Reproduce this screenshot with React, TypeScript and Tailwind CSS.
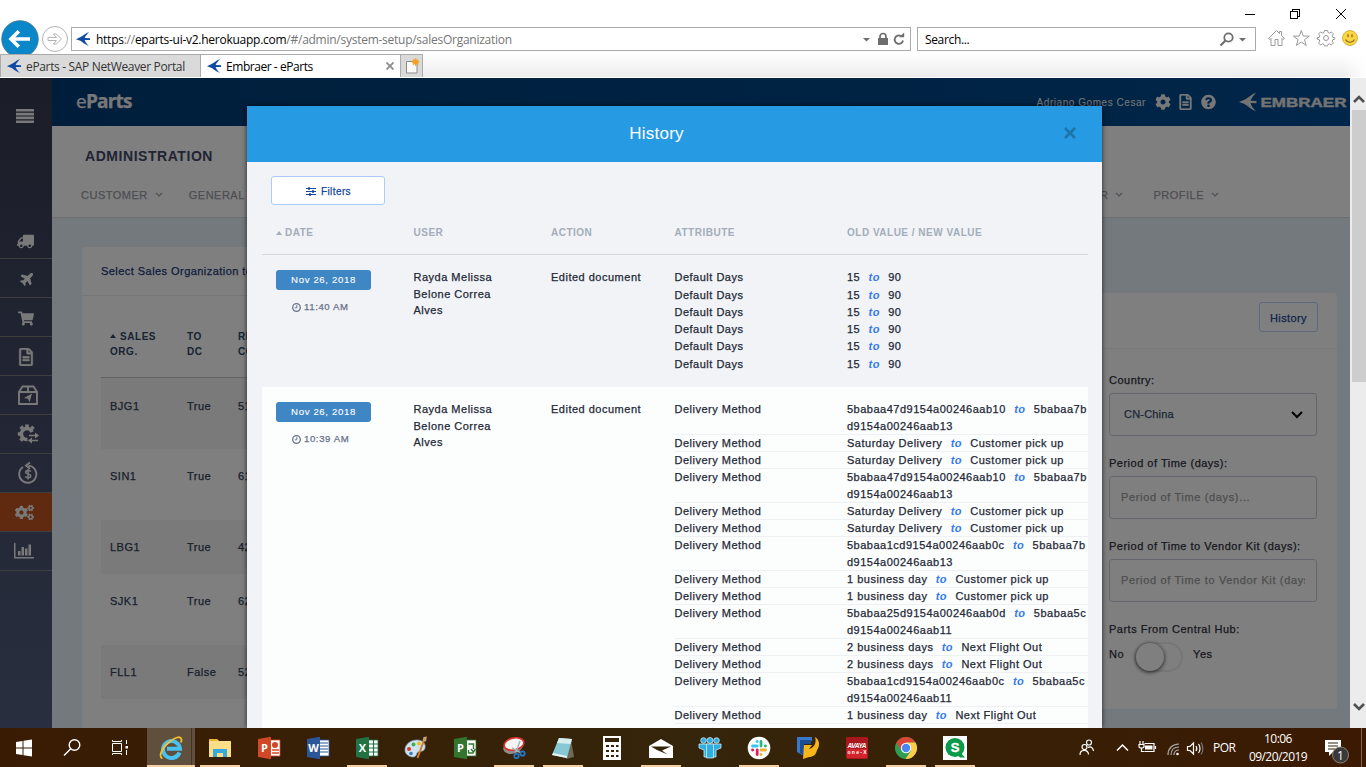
import React from "react";
import {
  FaTruck, FaPlane, FaShoppingCart, FaRegFileAlt, FaCog, FaCogs, FaQuestionCircle,
} from "react-icons/fa";

type Change = { from: string; to: string };

const A10 = "5babaa47d9154a00246aab10";
const C0C = "5babaa1cd9154a00246aab0c";
const D0D = "5babaa25d9154a00246aab0d";
const B13 = "5babaa7bd9154a00246aab13";
const B11 = "5babaa5cd9154a00246aab11";
const sat: Change = { from: "Saturday Delivery", to: "Customer pick up" };
const biz: Change = { from: "1 business day", to: "Customer pick up" };
const biz2: Change = { from: "2 business days", to: "Next Flight Out" };

const deliveries: Change[] = [
  { from: A10, to: B13 }, sat, sat,
  { from: A10, to: B13 }, sat, sat,
  { from: C0C, to: B13 }, biz, biz,
  { from: D0D, to: B11 }, biz2, biz2,
  { from: C0C, to: B11 },
  { from: "1 business day", to: "Next Flight Out" },
];

/* ---------- browser chrome ---------- */

const Swallow = ({ className = "" }: { className?: string }) => (
  <svg viewBox="0 0 14 14" className={className} fill="currentColor">
    <path d="M0 7.200 4.600 5C7 3.800 9 1.600 13 0 10.800 2.400 9.500 4 8.600 5.900L14 6.200v1.900l-5.400-.1c.8 2 2 4 4.400 6-4-1.600-6-3.500-8.200-5z" />
  </svg>
);

function TitleButtons() {
  return (
    <div className="flex h-[27px] justify-end">
      <svg className="mt-[8px] mr-[19px] h-3 w-[102px]" viewBox="0 0 102 12" fill="none" stroke="#000" shapeRendering="crispEdges">
        <path d="M0 6.500h10" />
        <path d="M45.500 3.500h7v7h-7zM47.500 3.500v-2h7v7h-2" />
        <path d="M91 1l10 10M101 1L91 11" shapeRendering="auto" />
      </svg>
    </div>
  );
}

function NavRow() {
  return (
    <div className="flex h-[27px] items-start">
      <div className="-mt-[7px] h-[34px] w-[40px] shrink-0 overflow-hidden">
        <svg viewBox="0 0 40 38" className="h-[38px] w-10" fill="none">
          <circle cx="20" cy="19" r="18.300" fill="#0a87c8" stroke="#42738c" strokeWidth=".8" />
          <path d="M11.500 19H30M18.800 11.200L11 19l7.800 7.800" stroke="#fff" strokeWidth="3.600" />
        </svg>
      </div>
      <svg viewBox="0 0 28 28" className="-mt-[2px] ml-[1px] h-7 w-7 shrink-0" fill="none" stroke="#b3b3b3">
        <circle cx="14" cy="14" r="12.500" />
        <path d="M7 12.500h8.500L12.300 9h2.900l5.300 5-5.300 5h-2.900l3.200-3.500H7z" />
      </svg>
      <div className="ml-[2px] flex h-6 w-[840px] shrink-0 items-center border border-[#ababab] pl-[4px] pr-[4px]">
        <Swallow className="h-[14px] w-[14px] text-[#0f4aa5]" />
        <span className="ml-[6px] grow pt-[2px] whitespace-nowrap font-['Open_Sans',sans-serif] text-[12px] leading-5 tracking-[-0.26px] text-[#767676]">
          <span className="text-black">https</span>://<span className="text-black">eparts-ui-v2.herokuapp.com</span>/#/admin/system-setup/salesOrganization
        </span>
        <svg viewBox="0 0 44 16" className="h-4 w-11" fill="#6d6d6d">
          <path d="M1 7h7L4.500 10.500z" />
          <path d="M16 7h10v7H16z" />
          <path d="M18 8V5.500a3 3 0 0 1 6 0V8" fill="none" stroke="#6d6d6d" strokeWidth="1.700" />
          <path d="M41 9.500a4.200 4.200 0 1 1-2-4.500" fill="none" stroke="#6d6d6d" strokeWidth="1.800" />
          <path d="M37 6.300h5.200V1.500z" />
        </svg>
      </div>
      <div className="ml-[6px] flex h-6 w-[339px] shrink-0 items-center border border-[#ababab] pr-[8px] pl-[7px]">
        <span className="grow pt-[2px] font-['Open_Sans',sans-serif] text-[12px] leading-5 tracking-[-0.35px] text-black">Search...</span>
        <svg viewBox="0 0 28 16" className="h-4 w-7" fill="none" stroke="#6d6d6d" strokeWidth="1.800">
          <circle cx="9.500" cy="6.500" r="4.200" />
          <path d="M6.500 9.500L1.500 14.500" strokeWidth="2.200" />
          <path d="M20 7h7L23.500 10.500z" fill="#6d6d6d" stroke="none" />
        </svg>
      </div>
      <svg viewBox="0 0 92 20" className="ml-[11px] mt-[1px] h-5 w-[92px]" fill="none" stroke="#9a9a9a">
        <path d="M1.500 10.500L9.500 2.500l3 3V3.500h2v4l3 3-1.500 1-1-1V17.500h-4v-6h-3v6h-4v-7l-1 1z" />
        <path d="M34.300 2.500l2 5.600h6l-4.800 3.600 1.800 5.800-5-3.500-5 3.500 1.800-5.800-4.800-3.600h6z" />
        <circle cx="59" cy="10" r="2.500" />
        <path d="M57.500 2.500h3l.5 2 1.500.6 1.900-1.200 2 2-1.200 1.900.6 1.500 2 .5v1.400l-2 .5-.6 1.400 1.200 1.900-2 2-1.900-1.200-1.500.6-.5 1.500h-3l-.5-1.500-1.500-.6-1.900 1.200-2-2 1.200-1.900-.6-1.400-2-.5v-1.400l2-.5.6-1.500-1.200-1.900 2-2 1.900 1.200 1.500-.6z" />
        <circle cx="83" cy="10" r="7.500" fill="#fbd543" stroke="#c9a437" strokeWidth=".8" />
        <path d="M81 6.300v3M85 6.300v3" stroke="#8a6a1c" strokeWidth="1.300" />
        <path d="M78.500 11.500c1.800 3.600 7.200 3.600 9 0" stroke="#8a6a1c" strokeWidth="1.100" />
      </svg>
    </div>
  );
}

function TabRow() {
  return (
    <div className="flex h-6 items-stretch border-b border-white bg-gradient-to-b from-white to-[#ececec] font-['Open_Sans',sans-serif] text-[12px] text-[#333]">
      <div className="flex w-[201px] items-center border-t border-r border-l border-[#ababab] bg-[#dadada] pl-[6px]">
        <Swallow className="h-[14px] w-[14px] text-[#0f4aa5]" />
        <span className="ml-[5px] pt-[2px] whitespace-nowrap tracking-[-0.34px]">eParts - SAP NetWeaver Portal</span>
      </div>
      <div className="flex w-[200px] items-center border-t border-r border-[#ababab] bg-white pr-[6px] pl-[6px]">
        <Swallow className="h-[14px] w-[14px] text-[#0f4aa5]" />
        <span className="ml-[5px] grow pt-[2px] whitespace-nowrap tracking-[-0.45px] text-black">Embraer - eParts</span>
        <svg viewBox="0 0 8 8" className="h-2 w-2" stroke="#8c8c8c" strokeWidth="1.800"><path d="M.5.500l7 7M7.500.500l-7 7" /></svg>
      </div>
      <div className="flex w-[22px] items-center justify-center border-t border-r border-[#ababab] bg-[#dadada]">
        <svg viewBox="0 0 16 16" className="h-4 w-4">
          <path d="M2.500 3.500h10.500v11.500H2.500z" fill="#fafafa" stroke="#8b8b8b" />
          <path d="M11.500.300v7.400M7.800 4h7.400M8.900 1.400l5.200 5.200M14.100 1.400L8.900 6.600" stroke="#f2a01e" strokeWidth="1.400" />
        </svg>
      </div>
      <div className="grow" />
      <div className="w-6 bg-gradient-to-r from-transparent to-white" />
    </div>
  );
}

/* ---------- page behind the dialog ---------- */

const BoxIcon = () => (
  <svg viewBox="0 0 20 20" className="h-5 w-5" fill="none" stroke="currentColor" strokeWidth="1.900">
    <path d="M1 7v12h18V7zM1 7l3.500-5.500h11L19 7M10 1.500V7" />
    <path d="M14 8.500l-8 4.500 4 .8 1.500 3.700z" fill="currentColor" stroke="none" />
  </svg>
);
const GearArrowsIcon = () => (
  <svg viewBox="0 0 22 20" className="h-5 w-[22px]" fill="none" stroke="currentColor">
    <path d="M15 8a5.500 5.500 0 1 0-4.500 7.500" strokeWidth="3.600" />
    <path d="M5.500 4.500L3.800 2.500M10 3V.5M14.500 4.800l2-2M4 10H.8M5.500 14.500l-2 2" strokeWidth="3.600" />
    <path d="M12 11.500h9M12 16.500h9" strokeWidth="1.600" />
    <path d="M18 8.500l4 3-4 3zM15 13.500l-4 3 4 3z" fill="currentColor" stroke="none" />
  </svg>
);
const DollarIcon = () => (
  <svg viewBox="0 0 20 22" className="h-[22px] w-5" fill="none" stroke="currentColor" strokeWidth="1.900">
    <path d="M10.500 3.600A8.600 8.600 0 1 1 5 5M12 .5L8 3.500l4 3.200" />
    <path d="M12.800 9.600c-.7-1.600-5.200-1.700-5.200.6s5.200 1.400 5.200 3.800-4.700 2.200-5.600.4M10.100 7v10.500" strokeWidth="1.500" />
  </svg>
);
const ChartIcon = () => (
  <svg viewBox="0 0 20 16" className="h-4 w-5" fill="currentColor">
    <path d="M0 0h1.500v14H20v1.500H0zM4 8h2.500v4.500H4zM7.500 4H10v8.500H7.500zM11 5.500h2.500v7H11zM14.500 1.500H17v11h-2.500z" />
  </svg>
);

function Sidebar() {
  const items = [
    { el: <FaTruck className="mt-[4px] h-[17px] w-[17px] -scale-x-100" />, pad: "pl-[17px]" },
    { el: <FaPlane className="h-[15px] w-[15px] -rotate-45" />, pad: "pl-5" },
    { el: <FaShoppingCart className="mt-[2px] h-[15px] w-4" />, pad: "pl-[18px]" },
    { el: <FaRegFileAlt className="mt-[2px] h-[18px] w-4" strokeWidth={12} stroke="currentColor" />, pad: "pl-[18px]" },
    { el: <BoxIcon />, pad: "pl-[18px]" },
    { el: <GearArrowsIcon />, pad: "pl-[17px]" },
    { el: <DollarIcon />, pad: "pl-[18px]" },
    { el: <FaCogs className="mt-px h-[19px] w-[19px]" />, pad: "pl-[15px]" },
    { el: <ChartIcon />, pad: "pl-[14px]" },
  ];
  return (
    <aside className="flex w-[52px] shrink-0 flex-col bg-gradient-to-b from-[#363a50] to-[#535e80] text-[#f2f2f2]">
      <div className="h-[142px] pt-[31px] pl-[16px]">
        <svg viewBox="0 0 18 14" className="h-[14px] w-[18px]" fill="currentColor">
          <path d="M0 0h18v2.600H0zM0 3.800h18v2.600H0zM0 7.600h18v2.600H0zM0 11.400h18V14H0z" />
        </svg>
      </div>
      {items.map((it, i) => (
        <div key={i} className={`flex h-[39px] items-center border-b border-[#7d7d7d] ${it.pad} ${i === 7 ? "bg-[#c05420]" : ""}`}>
          {it.el}
        </div>
      ))}
    </aside>
  );
}

const Caret = () => (
  <svg viewBox="0 0 8 6" className="h-[6px] w-2" fill="none" stroke="currentColor" strokeWidth="1.200"><path d="M1 1l3 3 3-3" /></svg>
);

const Label = ({ children }: { children: React.ReactNode }) => (
  <div className="h-[26px] text-[11px] leading-[26px] tracking-[0.5px] whitespace-nowrap text-[#30303c]">{children}</div>
);
const Field = ({ children }: { children: React.ReactNode }) => (
  <div className="mb-[14px] flex h-[43px] items-center overflow-hidden rounded-[3px] border border-[#c8ccdc] px-[11px] text-[11px] tracking-[0.65px] whitespace-nowrap text-[#9c9c9c]">
    <span className="overflow-hidden">{children}</span>
  </div>
);

function Page() {
  const rows = [
    ["BJG1", "True", "51", "h-[71px] bg-[#f5f5f5] pt-[18px]"],
    ["SIN1", "True", "61", "h-[71px] pt-[17px]"],
    ["LBG1", "True", "42", "h-[54px] bg-[#f5f5f5] pt-[17px]"],
    ["SJK1", "True", "62", "h-[71px] pt-[17px]"],
    ["FLL1", "False", "52", "h-[54px] bg-[#f5f5f5] pt-[17px]"],
  ];
  return (
    <div className="flex w-[1350px] font-['Liberation_Sans',Arial,sans-serif] [-webkit-text-stroke:0.25px]">
      <Sidebar />
      <div className="flex min-w-0 grow flex-col bg-[#e8f2fa]">
        <header className="flex h-12 shrink-0 items-center bg-gradient-to-r from-[#003d78] to-[#004c92] pl-6">
          <span className="-mt-[2px] grow font-['Open_Sans',sans-serif] text-[19px] tracking-[-0.8px] text-[#f0f0f0]">
            e<b>Parts</b>
          </span>
          <span className="text-[10px] tracking-[0.55px] text-[#f0f0f0] [-webkit-text-stroke:0]">Adriano Gomes Cesar</span>
          <FaCog className="ml-[9px] h-4 w-4 text-[#f0f0f0]" />
          <FaRegFileAlt className="ml-[7px] h-4 w-[15px] text-[#f0f0f0]" strokeWidth={12} stroke="currentColor" />
          <FaQuestionCircle className="ml-2 h-4 w-[15px] text-[#f0f0f0]" />
          <svg viewBox="0 0 108 20" className="ml-[23px] mr-[3px] h-5 w-[108px] shrink-0" fill="#e6e6e6">
            <path d="M0 10l6-2.500C9 6 12 2.500 17 .5 14 4 12.500 6.300 11.500 8.700l6 .3v2.200l-6-.1c1 3 2.500 5.700 5.700 8.200C12 17.500 9 14.200 5.500 12z" />
            <text x="21.500" y="14.500" fontSize="13" fontWeight="700" textLength="86" lengthAdjust="spacingAndGlyphs" stroke="#e6e6e6" strokeWidth=".4">EMBRAER</text>
          </svg>
        </header>
        <div className="h-[92px] shrink-0 border-b border-[#d8dde6] bg-white">
          <h1 className="pt-[20px] pl-[33px] text-[14px] leading-5 font-bold tracking-[0.55px] text-[#43496a] [-webkit-text-stroke:0]">ADMINISTRATION</h1>
          <nav className="mt-[19px] flex items-center text-[11px] leading-5 tracking-[0.5px] text-[#9a9da8]">
            <span className="ml-[29px]">CUSTOMER</span>
            <span className="ml-[7px]"><Caret /></span>
            <span className="ml-[26px]">GENERAL</span>
            <span className="grow" />
            <span>CUSTOMER</span>
            <span className="ml-[7px]"><Caret /></span>
            <span className="ml-[30px]">PROFILE</span>
            <span className="mr-[131px] ml-[7px]"><Caret /></span>
          </nav>
        </div>
        <div className="flex grow items-start justify-between overflow-hidden pr-[13px] pl-[30px]">
          <section className="mt-[29px] h-[560px] w-[600px] rounded bg-white">
            <div className="h-[49px] border-b border-[#eceff3] pl-[19px] text-[11px] leading-[49px] tracking-[0.45px] whitespace-nowrap text-[#1c3a7a]">
              Select Sales Organization to edit
            </div>
            <div className="ml-[19px]">
              <div className="flex h-[82px] items-start border-b border-[#c9c9c9] pt-[33px] pl-[9px] text-[10px] leading-[15px] font-bold tracking-[0.55px] text-[#334666] [-webkit-text-stroke:0]">
                <div className="w-[77px]">
                  <svg viewBox="0 0 6 4" className="mr-1 mb-[2px] inline h-[4px] w-[6px]" fill="currentColor"><path d="M3 0l3 4H0z" /></svg>
                  SALES<br />ORG.
                </div>
                <div className="w-[51px]">TO<br />DC</div>
                <div>RE<br />CO</div>
              </div>
              {rows.map(([a, b, c, cls]) => (
                <div key={a} className={`flex pl-[9px] text-[11px] leading-5 tracking-[0.5px] text-[#334058] ${cls}`}>
                  <span className="w-[77px]">{a}</span>
                  <span className="w-[51px]">{b}</span>
                  <span>{c}</span>
                </div>
              ))}
            </div>
          </section>
          <section className="mt-[75px] h-[416px] w-[500px] rounded bg-white">
            <div className="flex h-[56px] items-start justify-end border-b border-[#eceff3] pt-[9px] pr-[19px]">
              <button className="h-[30px] w-[59px] rounded-[3px] border border-[#b9d2f8] pt-[2px] text-[11px] tracking-[0.4px] text-[#1c4a9a]">History</button>
            </div>
            <div className="mr-5 ml-[272px] pt-[18px]">
              <Label>Country:</Label>
              <div className="mb-[14px] flex h-[43px] items-center justify-between rounded-[3px] border border-[#c8ccdc] pr-[13px] pl-[14px] text-[11px] tracking-[0.2px] text-[#40506c]">
                CN-China
                <svg viewBox="0 0 12 8" className="h-2 w-3" fill="none" stroke="#000" strokeWidth="2"><path d="M1 1l5 5 5-5" /></svg>
              </div>
              <Label>Period of Time (days):</Label>
              <Field>Period of Time (days)...</Field>
              <Label>Period of Time to Vendor Kit (days):</Label>
              <Field>Period of Time to Vendor Kit (days)...</Field>
              <Label>Parts From Central Hub:</Label>
              <div className="flex items-start text-[11px] leading-6 tracking-[0.5px] text-[#30303c]">
                No
                <span className="ml-[10px] flex h-[30px] w-[49px] rounded-full border-2 border-[#ededed]">
                  <span className="-mt-px h-7 w-7 rounded-full bg-white shadow-[0_1px_4px_#333]" />
                </span>
                <span className="ml-[10px]">Yes</span>
              </div>
            </div>
          </section>
        </div>
      </div>
    </div>
  );
}

/* ---------- history dialog ---------- */

function DateCell({ time }: { time: string }) {
  return (
    <div className="w-[138px] shrink-0 pt-[15px] pl-[14px]">
      <div className="h-5 w-[95px] rounded-[3px] bg-[#3f86c4] text-center text-[9.600px] leading-5 tracking-[0.650px] text-white [-webkit-text-stroke:0.1px]">Nov 26, 2018</div>
      <div className="mt-[7px] flex h-5 items-center pl-4 text-[9.600px] tracking-[0.6px] text-[#69718a]">
        <svg viewBox="0 0 9 9" className="mr-[3px] h-[9px] w-[9px]" fill="none" stroke="currentColor" strokeWidth="1.300">
          <circle cx="4.500" cy="4.500" r="3.800" /><path d="M4.800 2.200v2.600H2.800" strokeWidth="1" />
        </svg>
        {time}
      </div>
    </div>
  );
}

const To = () => <b className="mx-[8.300px] text-[#337af0] italic [-webkit-text-stroke:0]">to</b>;
const UserName = () => (
  <div className="w-[137.500px] shrink-0 pt-[14px] leading-[16.700px]">Rayda Melissa<br />Belone Correa<br />Alves</div>
);

function Dialog() {
  return (
    <div className="absolute top-[28px] left-[247px] flex h-[622px] w-[855px] flex-col overflow-hidden bg-[#f1f3f6] font-['Liberation_Sans',Arial,sans-serif] shadow-[0_0_5px_rgba(0,0,0,0.7)]">
      <div className="flex h-14 shrink-0 items-center bg-[#269ae3] pr-[26px]">
        <h2 className="grow pl-[2px] text-center text-[17px] tracking-[0.25px] text-white">History</h2>
        <svg viewBox="0 0 12 12" className="-mt-[2px] h-3 w-3" stroke="#1c74ab" strokeWidth="2.600"><path d="M1 1l10 10M11 1L1 11" /></svg>
      </div>
      <div className="pt-[14px] pr-[14px] pl-[15px] [-webkit-text-stroke:0.25px]">
        <button className="ml-[9px] flex h-[29px] w-[114px] items-center justify-center rounded-[3px] border border-[#aecbf8] bg-white pt-[2px] pl-px text-[10px] tracking-[0.4px] text-[#134a9e]">
          <svg viewBox="0 0 10 9" className="mr-[5px] h-[9px] w-[10px]" stroke="currentColor" fill="none">
            <path d="M0 1.500h10M0 4.500h10M0 7.500h10" />
            <path d="M3 0v3M7 3v3M4 6v3" strokeWidth="1.500" />
          </svg>
          Filters
        </button>
        <div className="mt-[6px] flex h-[44px] items-center border-b border-[#d5d9de] text-[10px] font-bold tracking-[0.5px] text-[#a3adbb] [-webkit-text-stroke:0]">
          <div className="flex w-[151.500px] items-center pl-[14px]">
            <svg viewBox="0 0 6 4" className="mr-[3px] h-1 w-[6px]" fill="currentColor"><path d="M3 0l3 4H0z" /></svg>
            DATE
          </div>
          <div className="w-[137.500px]">USER</div>
          <div className="w-[123.500px]">ACTION</div>
          <div className="w-[172.500px]">ATTRIBUTE</div>
          <div>OLD VALUE / NEW VALUE</div>
        </div>
        <div className="flex h-[132px] text-[11px] tracking-[0.5px] text-[#232836]">
          <div className="w-[151.500px]"><DateCell time="11:40 AM" /></div>
          <UserName />
          <div className="w-[123.500px] shrink-0 pt-[14px] leading-[17px]">Edited document</div>
          <div className="pt-[14px]">
            {[18, 17, 17, 17, 18, 17].map((h, i) => (
              <div key={i} className={`flex leading-[17px] ${h === 18 ? "h-[18px]" : "h-[17px]"}`}>
                <div className="w-[172.500px]">Default Days</div>
                <div>15<To />90</div>
              </div>
            ))}
          </div>
        </div>
        <div className="flex bg-[#fcfdfd] pb-[14px] text-[11px] tracking-[0.5px] text-[#232836]">
          <div className="w-[151.500px]"><DateCell time="10:39 AM" /></div>
          <UserName />
          <div className="w-[123.500px] shrink-0 pt-[14px] leading-[17px]">Edited document</div>
          <div className="pt-[14px]">
            {deliveries.map((d, i) => (
              <div key={i} className="flex leading-[17px] shadow-[inset_0_-1px_0_#eef0f4]">
                <div className="w-[172.500px] shrink-0">Delivery Method</div>
                <div className="w-[241px] shrink-0 break-all">{d.from}<To />{d.to}</div>
              </div>
            ))}
          </div>
        </div>
      </div>
    </div>
  );
}

function Scrollbar() {
  return (
    <div className="flex w-4 shrink-0 flex-col items-center bg-[#ececec] pl-px">
      <svg viewBox="0 0 12 8" className="mt-[17px] mb-[7px] h-2 w-3 shrink-0" fill="none" stroke="#505050" strokeWidth="2.600"><path d="M1 7l5-5 5 5" /></svg>
      <div className="h-[272px] w-[14px] shrink-0 bg-[#cdcdcd]" />
      <div className="grow" />
      <svg viewBox="0 0 12 8" className="mb-[17px] h-2 w-3 shrink-0" fill="none" stroke="#505050" strokeWidth="2.600"><path d="M1 1l5 5 5-5" /></svg>
    </div>
  );
}

/* ---------- taskbar ---------- */

const Office = ({ color, letter, children }: { color: string; letter: string; children: React.ReactNode }) => (
  <svg viewBox="0 0 24 24" className="h-6 w-6">
    <path d="M12 4h11v16H12z" fill="#fff" stroke={color} strokeWidth=".8" />
    {children}
    <path d="M1 3l13-2.300v22.600L1 21z" fill={color} />
    <text x="7.500" y="16" fontSize="11" fontWeight="700" textAnchor="middle" fill="#fff" fontFamily="Open Sans">{letter}</text>
  </svg>
);

const IE = () => (
  <svg viewBox="0 0 24 24" className="h-6 w-6" fill="none">
    <path d="M20.500 16.500A8.500 8.500 0 1 1 21 12.800H8" stroke="#49c1f1" strokeWidth="4" />
    <path d="M3.500 22.500C-.5 21 2 13 9 7S22-.5 22.500 3.500c.1 1-.3 2.200-.8 3" stroke="#f5c02c" strokeWidth="1.800" />
  </svg>
);
const Explorer = () => (
  <svg viewBox="0 0 24 24" className="h-6 w-6">
    <path d="M1 3h8l2 2h12v16H1z" fill="#fbdf88" /><path d="M1 3h8l1 2H1z" fill="#e9b634" />
    <path d="M5 13h14v8h-4v-4H9v4H5z" fill="#37a7e0" />
  </svg>
);
const Paint = () => (
  <svg viewBox="0 0 24 24" className="h-6 w-6">
    <path d="M1 14C1 8 7 4 13 4c6 0 9 4 8 8s-5 3-7 4-1 5-5 5-8-3-8-7z" fill="#cfe3ee" stroke="#88a9bb" strokeWidth=".7" />
    <circle cx="5" cy="13" r="2" fill="#d9372c" /><circle cx="9.500" cy="8.500" r="1.900" fill="#3fae49" />
    <circle cx="15" cy="7.500" r="1.900" fill="#f1bc23" /><circle cx="7" cy="17.500" r="1.800" fill="#3c78c8" />
    <path d="M20.500 3l-7 19" stroke="#d27a32" strokeWidth="2" /><path d="M18.500 5l1-4 3.500-.500-1 5z" fill="#c4a077" />
  </svg>
);
const Snip = () => (
  <svg viewBox="0 0 24 24" className="h-6 w-6" fill="none">
    <ellipse cx="11" cy="11" rx="10" ry="6.500" fill="#8e8e8e" transform="rotate(-18 11 11)" />
    <ellipse cx="12" cy="8" rx="10" ry="6" fill="#f5f5f5" stroke="#d9332b" strokeWidth="1.600" transform="rotate(-12 12 8)" />
    <path d="M18 5l-4 11M10 12l9 5" stroke="#a9b4bd" strokeWidth="1.500" />
    <circle cx="20.500" cy="17.500" r="2.200" stroke="#2577c9" strokeWidth="1.800" /><circle cx="14.500" cy="20" r="2.200" stroke="#2577c9" strokeWidth="1.800" />
  </svg>
);
const Note = () => (
  <svg viewBox="0 0 24 24" className="h-6 w-6">
    <path d="M20 4l3 17-8 2z" fill="#6e6a55" /><path d="M8 2l13 1-5 19L1 19z" fill="#86c9d4" />
    <path d="M8 2l13 1-1.300 5L6 7z" fill="#d6edf0" /><path d="M2 17l14 3-.5 2L1 19z" fill="#e9f3f4" />
  </svg>
);
const Calc = () => (
  <svg viewBox="0 0 18 24" className="h-6 w-[18px]">
    <path d="M0 0h18v24H0z" fill="#fff" />
    <path d="M2 2h14v4H2zM3 9h3v2H3zM8 9h3v2H8zM13 9h2.500v2H13zM3 14h3v2H3zM8 14h3v2H8zM13 14h2.500v2H13zM3 19h3v2H3zM8 19h3v2H8zM13 19h2.500v2H13z" fill="#35230a" />
  </svg>
);
const Mail = () => (
  <svg viewBox="0 0 24 20" className="h-5 w-6"><path d="M0 8l12-7 12 7v12H0z" fill="#fff" /><path d="M2 8.500h20l-9 4 5.500 4L8 12z" fill="#35230a" /></svg>
);
const Team = () => (
  <svg viewBox="0 0 24 24" className="h-6 w-6" fill="#30aee0" stroke="#e7f7fc" strokeWidth=".7">
    <circle cx="5.500" cy="4.500" r="2.800" /><circle cx="18.500" cy="4.500" r="2.800" />
    <path d="M1 8h9v13H6v-7l-5-2zM14 8h9v4l-5 2v7h-4z" /><circle cx="12" cy="4.500" r="3" /><path d="M8.500 8h7v14h-7z" />
  </svg>
);
const Slack = () => (
  <svg viewBox="0 0 24 24" className="h-6 w-6" strokeWidth="2.800" strokeLinecap="round">
    <circle cx="12" cy="12" r="11.300" fill="#fff" />
    <path d="M10.200 5.500v.2M5.500 10h4.700" stroke="#36c5f0" /><path d="M14 5.500V10M18.500 10h-.2" stroke="#2eb67d" />
    <path d="M14 14h4.500M14 18.500v-.2" stroke="#ecb22e" /><path d="M10.200 14v4.500M5.500 14h.2" stroke="#e01e5a" />
  </svg>
);
const Sap = () => (
  <svg viewBox="0 0 24 24" className="h-6 w-6">
    <path d="M1 1h15v4H6v14l-5-3z" fill="#3979c9" /><path d="M4 4h11v4H8v12l-4-3z" fill="#1d4d93" />
    <path d="M19 1c5 3 5 9 2 13-1 5-4 7-8 7l-6 2 1-14h8l-3 4c5-1 8-6 6-12z" fill="#f8b51c" />
  </svg>
);
const Avaya = () => (
  <svg viewBox="0 0 22 22" className="h-[22px] w-[22px]">
    <rect width="22" height="22" rx="1.500" fill="#ab161c" /><path d="M1 12h20v9H1z" fill="#d3242b" />
    <text x="11" y="10.500" fontSize="6.500" fontWeight="700" fontStyle="italic" textAnchor="middle" fill="#fff" textLength="19" fontFamily="Liberation Sans">AVAYA</text>
    <text x="11" y="17" fontSize="5" fontWeight="700" textAnchor="middle" fill="#fff" textLength="19" fontFamily="Liberation Sans">one-X</text>
  </svg>
);
const Chrome = () => (
  <svg viewBox="0 0 24 24" className="h-6 w-6">
    <circle cx="12" cy="12" r="11" fill="#2f9e4f" /><path d="M2.500 6.500A11 11 0 0 1 21.500 6.500H12L7.200 14.700z" fill="#dc4437" />
    <path d="M21.500 6.500A11 11 0 0 1 11.500 23l5.300-8.300L12 6.500z" fill="#fccd48" />
    <circle cx="12" cy="12" r="5.200" fill="#fff" /><circle cx="12" cy="12" r="4.200" fill="#4587f3" />
  </svg>
);
const Qlik = () => (
  <svg viewBox="0 0 24 24" className="h-6 w-6">
    <path d="M0 0h24v24H0z" fill="#fff" /><circle cx="12" cy="11.500" r="9.500" fill="#0b9a49" /><path d="M16 15l6 6.500h-5l-3-3z" fill="#0b9a49" />
    <text x="12" y="16.300" fontSize="13" fontWeight="700" textAnchor="middle" fill="#fff" stroke="#fff" strokeWidth=".4" fontFamily="Liberation Sans">S</text>
  </svg>
);

function Taskbar() {
  const apps: [React.ReactNode, boolean][] = [
    [<Explorer />, true],
    [<Office color="#d24726" letter="P"><circle cx="18" cy="9" r="3" fill="#d24726" /><path d="M15 14h7M15 17h7" stroke="#d24726" strokeWidth="1.300" /></Office>, false],
    [<Office color="#2b579a" letter="W"><path d="M14 7h8M14 10h8M14 13h8M14 16h8" stroke="#2b579a" strokeWidth="1.200" /></Office>, false],
    [<Office color="#217346" letter="X"><path d="M14 8h9M14 12h9M14 16h9M18.500 4v16" stroke="#217346" strokeWidth="1.200" /></Office>, true],
    [<Paint />, false],
    [<Office color="#31752f" letter="P"><path d="M15.500 8h5v5M20.500 17h-5v-3M18 13l2.500 3 2-3" stroke="#31752f" strokeWidth="1.400" fill="none" /></Office>, false],
    [<Snip />, true], [<Note />, true], [<Calc />, false], [<Mail />, true], [<Team />, false],
    [<Slack />, true], [<Sap />, false], [<Avaya />, false], [<Chrome />, true], [<Qlik />, true],
  ];
  return (
    <div className="flex h-[39px] shrink-0 items-stretch bg-gradient-to-r from-[#391b03] via-[#35250a] to-[#3b1903] font-['Open_Sans',sans-serif] text-white">
      <svg viewBox="0 0 147 39" className="h-[39px] w-[147px] shrink-0" fill="none" stroke="#fff">
        <path d="M16 14l6.500-1v6.500H16zM23.500 12.800l8.500-1.300v8h-8.500zM16 20.500h6.500V27L16 26zM23.500 20.500H32v8L23.500 27.200z" fill="#fff" stroke="none" />
        <circle cx="74.500" cy="17" r="5.300" strokeWidth="1.400" /><path d="M70.500 21L64 27.500" strokeWidth="1.400" />
        <path d="M112.500 15.500h9v8h-9zM112.500 12v1.500h9V12M112.500 27v-1.500h9V27M126.500 12v4M126.500 22v5" /><path d="M125.500 18h2.500v2.500h-2.500z" fill="#fff" stroke="none" />
      </svg>
      <div className="flex h-[39px] w-[48px] shrink-0 border-b-2 border-[#f6cf9d] bg-[#5f4f3c] pt-[2px]">
        <div className="flex w-[44px] items-center justify-center pl-[3px]"><IE /></div>
        <div className="-mt-[2px] w-px bg-[#42341f]" />
      </div>
      {apps.map(([el, open], i) => (
        <div key={i} className="flex w-[49px] shrink-0 justify-center">
          <div className={`flex w-10 items-center justify-center border-b-2 pt-[2px] ${open ? "border-[#f6cf9d]" : "border-transparent"}`}>{el}</div>
        </div>
      ))}
      <div className="grow" />
      <svg viewBox="0 0 130 39" className="h-[39px] w-[130px] shrink-0" fill="none" stroke="#fff" strokeWidth="1.200">
        <circle cx="8.500" cy="19" r="2.500" /><path d="M4 27c0-6 8-6 8.500-.5" /><circle cx="13" cy="14.500" r="2.500" /><path d="M12 19.500c3-1.500 5 .5 5.500 3.500" />
        <path d="M41 22.500l5.500-5.500 5.500 5.500" strokeWidth="1.500" />
        <path d="M68.500 15.500h9.500v8h-9.500M79.500 18v3" /><path d="M69 17.500h7.500v4H69z" fill="#fff" stroke="none" /><path d="M64 13v3M67 13v3M63 16.500h5v2c0 2-5 2-5 0zM65.500 20v3.500h3" />
        <path d="M92 27c0-7 4-10.500 11-11M95 27c0-5 3-8 8-8M98 27c0-3 2-5 5-5" stroke="#aaa" /><circle cx="101.500" cy="26" r="1.300" fill="#fff" stroke="none" />
        <path d="M111.500 18.500h2.500l3.500-3.500v11l-3.500-3.500h-2.500zM120 18c1 1.500 1 3.500 0 5M122.500 16c2 2.500 2 6.500 0 9" /><path d="M125 14.500c2.500 3.500 2.500 8.500 0 12" stroke="#777" />
      </svg>
      <div className="ml-[7px] w-6 text-[12px] leading-[39px] tracking-[-0.5px]">POR</div>
      <div className="ml-[9px] w-[64px] pt-[2px] text-center text-[12px] leading-[18px] tracking-[-0.550px] whitespace-nowrap">10:06<br />09/20/2019</div>
      <svg viewBox="0 0 52 39" className="h-[39px] w-[52px] shrink-0">
        <path d="M15 12h16v12h-8l-4 4v-4h-4z" fill="#fff" /><path d="M18 15h10M18 18h10M18 21h7" stroke="#35230a" />
        <circle cx="30.500" cy="27" r="8" fill="#393939" stroke="#8e8378" />
        <text x="30.500" y="31.500" fontSize="12" fill="#fff" textAnchor="middle">1</text>
        <path d="M51.500 0v39" stroke="#80664f" />
      </svg>
      <div className="w-1 shrink-0" />
    </div>
  );
}

export default function App() {
  return (
    <div className="flex h-[767px] w-[1366px] flex-col overflow-hidden bg-white">
      <TitleButtons />
      <NavRow />
      <TabRow />
      <main className="relative flex h-[650px] shrink-0 overflow-hidden">
        <Page />
        <Scrollbar />
        <div className="absolute inset-y-0 left-0 w-[1350px] bg-black/50" />
        <Dialog />
      </main>
      <Taskbar />
    </div>
  );
}
